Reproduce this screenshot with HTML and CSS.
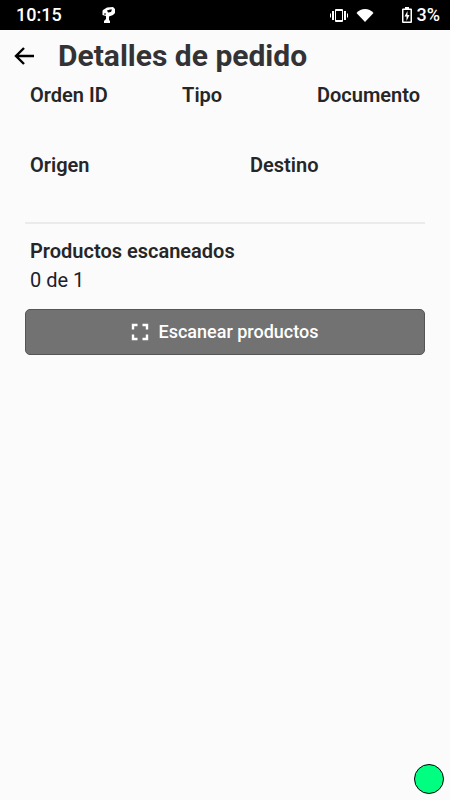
FILE: index.html
```html
<!DOCTYPE html>
<html lang="es">
<head>
<meta charset="utf-8">
<meta name="viewport" content="width=device-width, initial-scale=1">
<title>Detalles de pedido</title>
<link rel="stylesheet" href="styles.css">
</head>
<body>
<div class="status">
  <span>10:15</span>
  <svg class="app-icon" width="16" height="18" viewBox="0 0 16 18" aria-hidden="true">
    <path fill="#fff" d="M2 4 6 1.500 12 1l2 2v4l-2 2-4 1.500V14l1 1v2H3v-2l2-2v-3L1.500 9V5z"/>
    <path fill="#000" d="M6 4.500 9 3.500h2L10 6 7 6.500zM3 7.500h2v1H3z"/>
  </svg>
  <div class="status-icons">
    <svg width="18" height="14" viewBox="0 0 18 14" aria-hidden="true">
      <path fill="#fff" fill-rule="evenodd" d="M6 1h6q1 0 1 1v11q0 1-1 1H6q-1 0-1-1V2q0-1 1-1zm0 2v9h6V3zM2 3h2v9H2zM0 5.500h1v4H0zM14 3h2v9h-2zM17 5.500h1v4h-1z"/>
    </svg>
    <svg width="18" height="14" viewBox="0 0 18 14" aria-hidden="true">
      <path fill="#fff" d="M.5 5Q4 1 9 1t8.500 4L9 14z"/>
    </svg>
    <svg class="battery" width="10" height="16" viewBox="0 0 10 16" aria-hidden="true">
      <path fill="#fff" fill-rule="evenodd" d="M3 0h4v1.500h2q1 0 1 1V15q0 1-1 1H1q-1 0-1-1V2.500q0-1 1-1h2zM1.500 3v11.500h7V3z"/>
      <path fill="#fff" d="M5.500 4v4h2l-3 6V9.500h-2z"/>
    </svg>
    <span class="percent">3%</span>
  </div>
</div>
<header class="header">
  <button class="back" type="button" aria-label="Volver">
    <svg width="20" height="18" viewBox="0 0 20 18" aria-hidden="true">
      <path fill="none" stroke="#000" stroke-width="2.4" d="M20 9H2M10 1 2 9l8 8"/>
    </svg>
  </button>
  <h1>Detalles de pedido</h1>
</header>
<main>
  <div class="fields thirds">
    <h2>Orden ID</h2><h2>Tipo</h2><h2>Documento</h2>
  </div>
  <div class="fields halves">
    <h2>Origen</h2><h2>Destino</h2>
  </div>
  <section class="products">
    <h2>Productos escaneados</h2>
    <p>0 de 1</p>
  </section>
  <button class="scan" type="button">
    <svg width="18" height="18" viewBox="0 0 18 18" aria-hidden="true">
      <path fill="none" stroke="#fff" stroke-width="2.4" d="M2 6.500V2h4.500M11.500 2H16v4.500M16 11.500V16h-4.500M6.500 16H2v-4.500"/>
    </svg>
    Escanear productos
  </button>
</main>
<div class="online" role="status" aria-label="Conectado"></div>
</body>
</html>
```

FILE: styles.css
```css
* {
  box-sizing: border-box;
}

body {
  margin: 0;
  min-height: 100vh;
  background: #fbfbfb;
  color: #262628;
  font-family: Roboto, sans-serif;
  font-size: 20px;
  line-height: 28px;
}

h1,
h2,
p {
  margin: 0;
}

h2 {
  font-size: 20px;
  font-weight: 600;
}

.status {
  display: flex;
  align-items: center;
  height: 30px;
  padding: 0 10px 0 16px;
  background: #000;
  color: #fff;
  font-size: 18px;
  font-weight: 500;
}

.app-icon {
  margin-left: 39px;
}

.status-icons {
  display: flex;
  align-items: center;
  gap: 8px;
  margin-left: auto;
}

.battery {
  margin-left: 20px;
}

.percent {
  margin-left: -3px;
}

.header {
  display: flex;
  align-items: center;
  gap: 24px;
  height: 51px;
  padding: 1px 14px 0;
}

.back {
  display: flex;
  padding: 0;
  border: 0;
  background: none;
}

h1 {
  color: #333335;
  font-size: 30px;
  font-weight: 700;
}

main {
  padding: 0 25px;
}

.fields {
  display: grid;
  min-height: 70px;
  padding: 0 5px;
}

.thirds {
  grid-template-columns: 39% 1fr auto;
}

.halves {
  grid-template-columns: 1fr 1fr;
  column-gap: 50px;
}

.products {
  display: grid;
  gap: 1px;
  margin-top: 1px;
  padding: 13px 5px;
  border-top: 2px solid #ebebeb;
}

.products p {
  color: #20202a;
}

.scan {
  display: flex;
  align-items: center;
  justify-content: center;
  gap: 9px;
  margin-top: 2px;
  width: 100%;
  height: 46px;
  padding: 0;
  border: 1px solid #555;
  border-radius: 5px;
  background: #727272;
  color: #fff;
  font: 500 18px/24px Roboto, sans-serif;
}

.online {
  position: fixed;
  right: 6px;
  bottom: 6px;
  width: 30px;
  height: 30px;
  border: 1px solid #000;
  border-radius: 50%;
  background: #00ff80;
}
```
